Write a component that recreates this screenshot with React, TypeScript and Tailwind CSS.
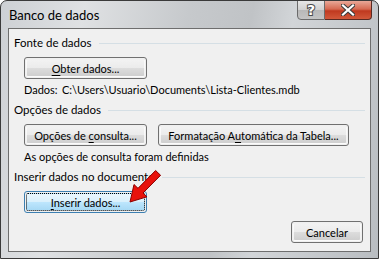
import React from "react";

const font = { fontFamily: 'Lato, "Liberation Sans", Arial, sans-serif' };

function Btn({ children, w, focused }: { children: React.ReactNode; w: string; focused?: boolean }) {
  return (
    <div
      className={
        "h-[22px] shrink-0 rounded-[3px] border p-px " +
        w +
        (focused ? " border-[#3c7fb1]" : " border-[#707070]")
      }
    >
      <div
        className={
          "h-full w-full rounded-[2px] flex items-center justify-center text-[11px] text-black whitespace-nowrap " +
          (focused
            ? "bg-[linear-gradient(#eaf6fd_0%,#d9f0fc_50%,#bee6fd_50%,#a7d9f5_100%)] border border-dotted border-black"
            : "bg-[linear-gradient(#f2f2f2_0%,#ebebeb_50%,#dddddd_50%,#cfcfcf_100%)] border border-white/70")
        }
      >
        <span className="leading-none">{children}</span>
      </div>
    </div>
  );
}

function Heading({ children }: { children: React.ReactNode }) {
  return (
    <div className="flex items-center h-[16px] pr-[5px]">
      <span className="text-[11.5px] text-black leading-[16px] whitespace-nowrap">{children}</span>
      <div className="flex-1 ml-[7px] h-px bg-[#d5dfe5]" />
    </div>
  );
}

export default function App() {
  return (
    <div className="w-[380px] h-[260px] bg-white relative" style={font}>
      <div className="w-[379px] h-[259px] rounded-t-[7px] border border-[#3a3a3a] bg-[linear-gradient(100deg,#cdd0d4_0%,#dfe1e3_20%,#c6c9cc_45%,#c0c3c6_60%,#d2d5d8_70%,#b9bdc1_100%)] flex flex-col relative overflow-hidden">
        {/* title bar */}
        <div className="h-[27px] flex items-start relative shrink-0">
          <span className="ml-[8px] mt-[6px] text-[13px] leading-[17px] text-black">Banco de dados</span>
          <div className="absolute right-[6px] top-[-1px] flex">
            <div className="w-[28px] h-[20px] rounded-bl-[4px] border border-[#6b6b6b] bg-[linear-gradient(#e6e6e6_0%,#d0d0d0_50%,#b8b8b8_50%,#c4c4c4_100%)] flex items-center justify-center">
              <svg width="12" height="14" viewBox="0 0 12 14">
                <text x="6" y="12" textAnchor="middle" fontSize="14" fontWeight="bold" fontFamily="DejaVu Sans, sans-serif" fill="#ffffff" stroke="#4a4a4a" strokeWidth="2" paintOrder="stroke">?</text>
              </svg>
            </div>
            <div className="w-[47px] h-[20px] rounded-br-[4px] border border-l-0 border-[#5a2a22] bg-[linear-gradient(#e9a898_0%,#d66a52_45%,#c0391f_55%,#d2583a_100%)] flex items-center justify-center">
              <svg width="14" height="12" viewBox="0 0 14 12">
                <path d="M2 1.5 L12 10.5 M12 1.5 L2 10.5" stroke="#3b3b3b" strokeWidth="4.2" strokeLinecap="square" />
                <path d="M2 1.5 L12 10.5 M12 1.5 L2 10.5" stroke="#ffffff" strokeWidth="2.2" strokeLinecap="square" />
              </svg>
            </div>
          </div>
        </div>
        {/* client */}
        <div className="mx-[7px] mb-[6px] flex-1 border border-[#6e6e6e] bg-[#f0f0f0] flex flex-col pl-[5px] pt-[6px]">
          <Heading>Fonte de dados</Heading>
          <div className="ml-[10px] mt-[6px]">
            <Btn w="w-[123px]">
              <span className="underline underline-offset-2">O</span>bter dados...
            </Btn>
          </div>
          <div className="ml-[10px] mt-[3px] h-[16px] flex text-[11px] leading-[16px] text-black whitespace-nowrap">
            <span className="w-[38px] shrink-0">Dados:</span>
            <span>C:\Users\Usuario\Documents\Lista-Clientes.mdb</span>
          </div>
          <div className="mt-[4px]">
            <Heading>Opções de dados</Heading>
          </div>
          <div className="ml-[10px] mt-[6px] flex gap-[11px]">
            <Btn w="w-[123px]">
              Opções de <span className="underline underline-offset-2">c</span>onsulta...
            </Btn>
            <Btn w="w-[191px]">
              Formatação A<span className="underline underline-offset-2">u</span>tomática da Tabela...
            </Btn>
          </div>
          <div className="ml-[10px] mt-[3px] h-[16px] text-[11px] leading-[16px] text-black whitespace-nowrap">
            As opções de consulta foram definidas
          </div>
          <div className="mt-[4px]">
            <Heading>Inserir dados no documento</Heading>
          </div>
          <div className="ml-[10px] mt-[6px]">
            <Btn w="w-[123px]" focused>
              <span className="underline underline-offset-2">I</span>nserir dados...
            </Btn>
          </div>
          <div className="mt-auto mb-[8px] mr-[7px] flex justify-end">
            <Btn w="w-[72px]">Cancelar</Btn>
          </div>
        </div>
        {/* red arrow */}
        <svg className="absolute left-[124px] top-[166px]" width="40" height="40" viewBox="0 0 40 40">
          <path
            d="M5 35 L9 17.5 L13 21.3 L30.6 3.5 L35.6 8.3 L18 26 L22 29.8 Z"
            fill="#e8120c"
            stroke="#8a0000"
            strokeWidth="1"
            strokeLinejoin="round"
          />
        </svg>
      </div>
    </div>
  );
}
